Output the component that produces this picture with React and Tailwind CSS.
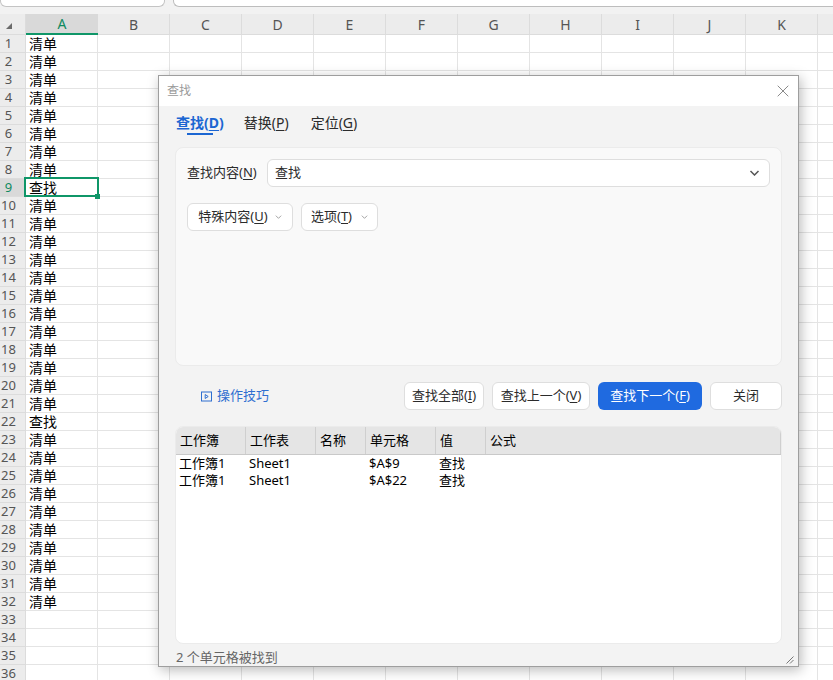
import React from "react";

const FONT = '"Noto Sans", "Noto Sans CJK SC", sans-serif';
const columns = ["A", "B", "C", "D", "E", "F", "G", "H", "I", "J", "K"];
const rows = Array.from({ length: 36 }, (_, i) => i + 1);

const cellText = (row) => {
  if (row === 9 || row === 22) return "查找";
  return row <= 32 ? "清单" : "";
};

const resultColumns = [
  { title: "工作簿", width: "w-[70px]" },
  { title: "工作表", width: "w-[70px]" },
  { title: "名称", width: "w-[50px]" },
  { title: "单元格", width: "w-[70px]" },
  { title: "值", width: "w-[50px]" },
  { title: "公式", width: "flex-1" },
];

const results = [
  ["工作簿1", "Sheet1", "", "$A$9", "查找"],
  ["工作簿1", "Sheet1", "", "$A$22", "查找"],
];

const Chevron = ({ className, weight = 1 }) => (
  <svg viewBox="0 0 10 6" className={className} fill="none" stroke="currentColor" strokeWidth={weight}>
    <path d="M1 1l4 4 4-4" />
  </svg>
);

const Key = ({ children }) => <span className="underline underline-offset-2">{children}</span>;

const DialogButton = ({ className, children }) => (
  <button className={`h-7 rounded-md border border-[#dedede] bg-white text-[13px] text-[#2b2b2b] ${className}`}>
    {children}
  </button>
);

const Sheet = () => (
  <div className="flex flex-col">
    <div className="flex h-[14px] items-start gap-2 bg-[#f2f2f2]">
      <div className="h-[7px] w-[165px] rounded-b-md border border-t-0 border-[#c4c4c4] bg-white" />
      <div className="h-[7px] flex-1 rounded-bl-md border border-t-0 border-r-0 border-[#bdbdbd] bg-white" />
    </div>
    <div className="flex h-[21px] bg-[#ececec] text-[14px] text-[#555]">
      <div className="flex w-[26px] shrink-0 items-center border-r border-b border-[#dcdcdc] pl-[6px]">
        <div className="mt-1 h-0 w-0 border-b-[6px] border-l-[6px] border-b-[#6b6b6b] border-l-transparent" />
      </div>
      {columns.map((col) => (
        <div
          key={col}
          className={
            col === "A"
              ? "flex w-[72px] shrink-0 items-center justify-center border-b-2 border-[#0f9668] bg-[#d9d9d9] text-[#0f8a60]"
              : "flex w-[72px] shrink-0 items-center justify-center border-r border-b border-[#dcdcdc]"
          }
        >
          {col}
        </div>
      ))}
      <div className="flex-1 border-b border-[#dcdcdc]" />
    </div>
    {rows.map((row) => (
      <div key={row} className="flex h-[18px] bg-white">
        <div
          className={`flex w-[26px] shrink-0 items-center justify-center border-r border-b border-[#dcdcdc] pr-2 text-[13px] ${
            row === 9 ? "bg-[#d9d9d9] text-[#0f8a60]" : "bg-[#ececec] text-[#555]"
          }`}
        >
          {row}
        </div>
        {columns.map((col) => (
          <div
            key={col}
            className="flex w-[72px] shrink-0 items-center overflow-visible border-r border-b border-[#e4e4e4] pl-[3px] text-[14px] leading-none text-black"
          >
            {col === "A" ? cellText(row) : ""}
          </div>
        ))}
        <div className="flex-1 border-b border-[#e4e4e4]" />
      </div>
    ))}
  </div>
);

const FindDialog = () => (
  <div className="absolute top-[75px] left-[158px] flex h-[592px] w-[641px] flex-col border border-[#9e9e9e] bg-[#f3f3f3] shadow-[2px_3px_12px_rgba(0,0,0,0.28)]">
    <div className="flex h-[30px] shrink-0 items-center justify-between bg-white pr-[9px] pl-2 text-[12px] text-[#9a9a9a]">
      <span>查找</span>
      <svg viewBox="0 0 12 12" className="h-3 w-3 text-[#7d7d7d]" fill="none" stroke="currentColor" strokeWidth="0.9">
        <path d="M.7.7l10.6 10.6M11.3.7L.7 11.3" />
      </svg>
    </div>

    <div className="flex h-[41px] shrink-0 gap-5 pt-[7px] pl-[17px] text-[14px] leading-[19px] text-[#2b2b2b]">
      <div className="flex flex-col items-center">
        <span className="font-bold text-[#1b66d2]">
          查找(<Key>D</Key>)
        </span>
        <div className="mt-px h-0.5 w-[26px] bg-[#1b66d2]" />
      </div>
      <span>
        替换(<Key>P</Key>)
      </span>
      <span className="ml-0.5">
        定位(<Key>G</Key>)
      </span>
    </div>

    <div className="mx-4 flex h-[219px] shrink-0 flex-col rounded-lg border border-[#ebebeb] bg-[#f9f9f9] pt-[11px] pr-[11px] pl-[11px] text-[13px] text-[#2b2b2b]">
      <div className="flex items-center gap-[9px]">
        <span className="w-[71px]">
          查找内容(<Key>N</Key>)
        </span>
        <div className="flex h-7 flex-1 items-center justify-between rounded-md border border-[#dedede] bg-white pr-[9px] pl-[7px]">
          <span>查找</span>
          <Chevron className="h-[6px] w-[11px] text-[#555]" weight={1.5} />
        </div>
      </div>
      <div className="mt-4 flex gap-2">
        <DialogButton className="flex w-[106px] items-center justify-center gap-[7px]">
          <span>
            特殊内容(<Key>U</Key>)
          </span>
          <Chevron className="h-1 w-[7px] text-[#777]" />
        </DialogButton>
        <DialogButton className="flex w-[77px] items-center justify-center gap-[9px]">
          <span>
            选项(<Key>T</Key>)
          </span>
          <Chevron className="h-1 w-[7px] text-[#777]" />
        </DialogButton>
      </div>
    </div>

    <div className="mx-4 mt-4 flex h-7 shrink-0 items-center text-[13px]">
      <div className="ml-[26px] flex flex-1 items-center gap-[5px] text-[#2f6fd0]">
        <svg viewBox="0 0 11 11" className="h-[11px] w-[11px]" fill="none" stroke="currentColor">
          <rect x="0.5" y="1" width="10" height="9" />
          <path d="M4.2 3.5v4l3-2z" />
        </svg>
        <span>操作技巧</span>
      </div>
      <div className="flex gap-2">
        <DialogButton className="w-20">
          查找全部(<Key>I</Key>)
        </DialogButton>
        <DialogButton className="w-[98px]">
          查找上一个(<Key>V</Key>)
        </DialogButton>
        <button className="h-7 w-[104px] rounded-md bg-[#1f6ae0] text-[13px] text-white">
          查找下一个(<Key>F</Key>)
        </button>
        <DialogButton className="w-[72px]">关闭</DialogButton>
      </div>
    </div>

    <div className="mx-4 mt-4 flex h-[218px] shrink-0 flex-col overflow-hidden rounded-lg border border-[#ebebeb] bg-white text-[13px] leading-[17px] text-black">
      <div className="flex h-7 shrink-0 border-b border-[#c9c9c9] bg-[#e5e5e5]">
        {resultColumns.map((col) => (
          <div key={col.title} className={`flex items-center border-r border-[#cfcfcf] pl-1 ${col.width}`}>
            {col.title}
          </div>
        ))}
      </div>
      <div>
        {results.map((row) => (
          <div key={row[3]} className="flex h-[17px]">
            {row.map((value, i) => (
              <div key={i} className={`pl-[3px] ${resultColumns[i].width}`}>
                {value}
              </div>
            ))}
          </div>
        ))}
      </div>
    </div>

    <div className="relative flex flex-1 items-center pt-1 pl-[17px] text-[13px] text-[#666]">
      <span>2 个单元格被找到</span>
      <svg viewBox="0 0 8 8" className="absolute right-1 bottom-1 h-2 w-2 text-[#777]" fill="none" stroke="currentColor">
        <path d="M.5 7.5l7-7M4 7.5l3.5-3.5" />
      </svg>
    </div>
  </div>
);

export default function App() {
  return (
    <div className="relative h-[680px] w-[833px] overflow-hidden bg-white" style={{ fontFamily: FONT }}>
      <Sheet />
      {/* selected cell A9 */}
      <div className="absolute top-[177px] left-6 h-5 w-[75px] border-2 border-[#0f9668]" />
      <div className="absolute top-[194px] left-[95px] h-[5px] w-[5px] bg-[#0f9668]" />
      <FindDialog />
    </div>
  );
}
